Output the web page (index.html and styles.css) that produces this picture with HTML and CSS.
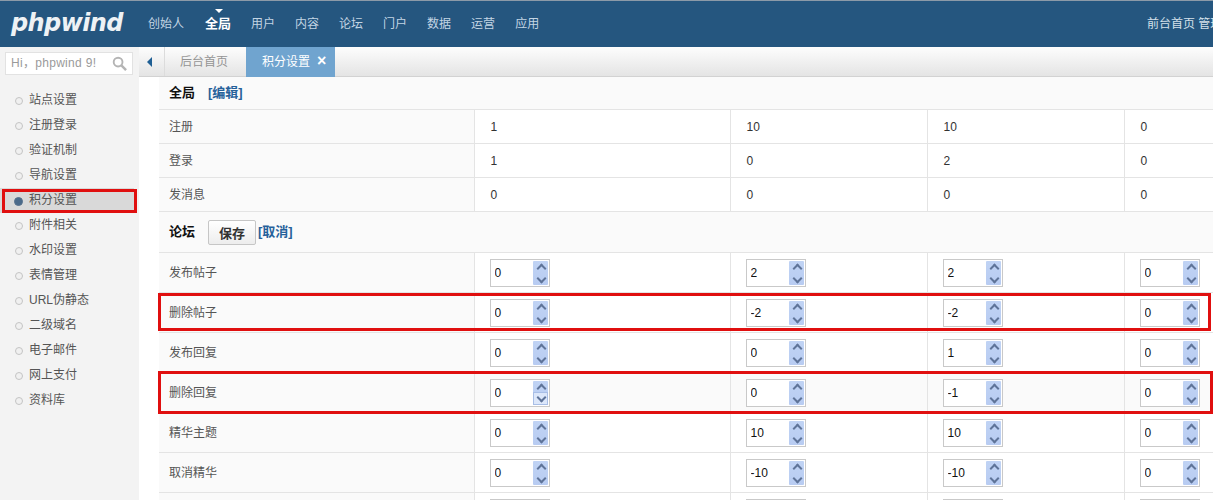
FILE: index.html
```html
<!DOCTYPE html>
<html lang="zh">
<head>
<meta charset="utf-8">
<title>积分设置</title>
<link rel="stylesheet" href="styles.css">
</head>
<body>
<header class="top">
  <div class="logo">phpwind</div>
  <nav class="nav">
    <a class="nav-item">创始人</a>
    <a class="nav-item is-current">全局</a>
    <a class="nav-item">用户</a>
    <a class="nav-item">内容</a>
    <a class="nav-item">论坛</a>
    <a class="nav-item">门户</a>
    <a class="nav-item">数据</a>
    <a class="nav-item">运营</a>
    <a class="nav-item">应用</a>
  </nav>
  <div class="top-right">前台首页 管理</div>
</header>
<div class="body-wrap">
  <aside class="side">
    <div class="search">
      <span class="search-text">Hi，phpwind 9!</span>
      <svg class="search-icon" width="15" height="15" viewBox="0 0 16 16"><circle cx="6.5" cy="6.5" r="4.7" fill="none" stroke="#b4b4b4" stroke-width="2"/><path d="M10 10l5 5" stroke="#b4b4b4" stroke-width="2.6" fill="none"/></svg>
    </div>
    <ul class="menu">
      <li class="menu-item">站点设置</li>
      <li class="menu-item">注册登录</li>
      <li class="menu-item">验证机制</li>
      <li class="menu-item">导航设置</li>
      <li class="menu-item is-active">积分设置</li>
      <li class="menu-item">附件相关</li>
      <li class="menu-item">水印设置</li>
      <li class="menu-item">表情管理</li>
      <li class="menu-item">URL伪静态</li>
      <li class="menu-item">二级域名</li>
      <li class="menu-item">电子邮件</li>
      <li class="menu-item">网上支付</li>
      <li class="menu-item">资料库</li>
    </ul>
  </aside>
  <main class="main">
    <div class="tabs">
      <div class="tab-toggle"><span class="tab-arrow"></span></div>
      <div class="tab">后台首页</div>
      <div class="tab is-on">积分设置<span class="tab-close">×</span></div>
    </div>
    <div class="content">
      <table class="grid">
        <colgroup><col class="c1"><col class="c2"><col class="c3"><col class="c4"><col class="c5"></colgroup>
        <tr class="head"><th colspan="5"><b class="sec">全局</b><a class="link">[编辑]</a></th></tr>
        <tr class="plain"><td>注册</td><td>1</td><td>10</td><td>10</td><td>0</td></tr>
        <tr class="plain"><td>登录</td><td>1</td><td>0</td><td>2</td><td>0</td></tr>
        <tr class="plain"><td>发消息</td><td>0</td><td>0</td><td>0</td><td>0</td></tr>
        <tr class="head head-form"><th colspan="5"><b class="sec">论坛</b><button class="save">保存</button><a class="link">[取消]</a></th></tr>
        <tr class="form"><td>发布帖子</td>
          <td><span class="num"><input class="num-in" value="0"><span class="spin"><i class="up"></i><i class="down"></i></span></span></td>
          <td><span class="num"><input class="num-in" value="2"><span class="spin"><i class="up"></i><i class="down"></i></span></span></td>
          <td><span class="num"><input class="num-in" value="2"><span class="spin"><i class="up"></i><i class="down"></i></span></span></td>
          <td><span class="num"><input class="num-in" value="0"><span class="spin"><i class="up"></i><i class="down"></i></span></span></td></tr>
        <tr class="form"><td>删除帖子</td>
          <td><span class="num"><input class="num-in" value="0"><span class="spin"><i class="up"></i><i class="down"></i></span></span></td>
          <td><span class="num"><input class="num-in" value="-2"><span class="spin"><i class="up"></i><i class="down"></i></span></span></td>
          <td><span class="num"><input class="num-in" value="-2"><span class="spin"><i class="up"></i><i class="down"></i></span></span></td>
          <td><span class="num"><input class="num-in" value="0"><span class="spin"><i class="up"></i><i class="down"></i></span></span></td></tr>
        <tr class="form"><td>发布回复</td>
          <td><span class="num"><input class="num-in" value="0"><span class="spin"><i class="up"></i><i class="down"></i></span></span></td>
          <td><span class="num"><input class="num-in" value="0"><span class="spin"><i class="up"></i><i class="down"></i></span></span></td>
          <td><span class="num"><input class="num-in" value="1"><span class="spin"><i class="up"></i><i class="down"></i></span></span></td>
          <td><span class="num"><input class="num-in" value="0"><span class="spin"><i class="up"></i><i class="down"></i></span></span></td></tr>
        <tr class="form is-hover"><td>删除回复</td>
          <td><span class="num"><input class="num-in" value="0"><span class="spin is-hover"><i class="up"></i><i class="down"></i></span></span></td>
          <td><span class="num"><input class="num-in" value="0"><span class="spin"><i class="up"></i><i class="down"></i></span></span></td>
          <td><span class="num"><input class="num-in" value="-1"><span class="spin"><i class="up"></i><i class="down"></i></span></span></td>
          <td><span class="num"><input class="num-in" value="0"><span class="spin"><i class="up"></i><i class="down"></i></span></span></td></tr>
        <tr class="form"><td>精华主题</td>
          <td><span class="num"><input class="num-in" value="0"><span class="spin"><i class="up"></i><i class="down"></i></span></span></td>
          <td><span class="num"><input class="num-in" value="10"><span class="spin"><i class="up"></i><i class="down"></i></span></span></td>
          <td><span class="num"><input class="num-in" value="10"><span class="spin"><i class="up"></i><i class="down"></i></span></span></td>
          <td><span class="num"><input class="num-in" value="0"><span class="spin"><i class="up"></i><i class="down"></i></span></span></td></tr>
        <tr class="form"><td>取消精华</td>
          <td><span class="num"><input class="num-in" value="0"><span class="spin"><i class="up"></i><i class="down"></i></span></span></td>
          <td><span class="num"><input class="num-in" value="-10"><span class="spin"><i class="up"></i><i class="down"></i></span></span></td>
          <td><span class="num"><input class="num-in" value="-10"><span class="spin"><i class="up"></i><i class="down"></i></span></span></td>
          <td><span class="num"><input class="num-in" value="0"><span class="spin"><i class="up"></i><i class="down"></i></span></span></td></tr>
        <tr class="form"><td></td>
          <td><span class="num"><input class="num-in" value="0"><span class="spin"><i class="up"></i><i class="down"></i></span></span></td>
          <td><span class="num"><input class="num-in" value="0"><span class="spin"><i class="up"></i><i class="down"></i></span></span></td>
          <td><span class="num"><input class="num-in" value="0"><span class="spin"><i class="up"></i><i class="down"></i></span></span></td>
          <td><span class="num"><input class="num-in" value="0"><span class="spin"><i class="up"></i><i class="down"></i></span></span></td></tr>
      </table>
    </div>
  </main>
</div>
<div class="mark mark-side"></div>
<div class="mark mark-row1"></div>
<div class="mark mark-row2"></div>
</body>
</html>
```
FILE: styles.css
```css
* { box-sizing: border-box; }
html, body { margin: 0; height: 500px; overflow: hidden; background: #fff; }
body { position: relative; width: 1213px; font: 12px/1.4 "Liberation Sans", "Noto Sans CJK SC", sans-serif; color: #444; }
a { text-decoration: none; }

.top { height: 47px; display: flex; align-items: center; background: #25567f; border-top: 1px solid #8c9aa8; overflow: hidden; position: relative; }
.logo { width: 148px; flex: none; padding-left: 11px; margin-top: -2px; font: italic bold 24px/1 "DejaVu Sans", sans-serif; color: #eef2f5; letter-spacing: -.6px; }
.nav { display: flex; gap: 20px; }
.nav-item { color: #c3d5e4; font-size: 12px; line-height: 18px; position: relative; white-space: nowrap; }
.nav-item.is-current { color: #fff; font-weight: bold; font-size: 13px; margin-left: 1px; }
.nav-item.is-current::before { content: ""; position: absolute; left: 10px; top: -6px; border: 4px solid transparent; border-top-color: #fff; border-bottom-width: 0; }
.top-right { position: absolute; left: 1147px; top: 14px; white-space: nowrap; color: #d4e0ea; line-height: 18px; }

.body-wrap { display: flex; height: 453px; }
.side { width: 139px; flex: none; background: #f3f3f3; padding: 5px 5px 0 0; }
.search { margin-left: 5px; height: 23px; width: 128px; background: #fff; border: 1px solid #e2e2e2; display: flex; align-items: center; padding: 0 5px; overflow: hidden; position: relative; }
.search-text { color: #9a9a9a; white-space: nowrap; font-size: 12px; letter-spacing: .3px; width: 88px; overflow: hidden; }
.search-icon { position: absolute; right: 5px; top: 3px; }
.menu { list-style: none; margin: 13px 0 0; padding: 0; }
.menu-item { height: 25px; line-height: 25px; padding-left: 29px; color: #555; position: relative; white-space: nowrap; }
.menu-item::before { content: ""; position: absolute; left: 15px; top: 9px; width: 6px; height: 6px; border-radius: 50%; border: 1px solid #c4c4c4; background: #f0f0f0; }
.menu-item.is-active { background: #d9d9d9; width: 134px; }
.menu-item.is-active::before { left: 14px; width: 7px; height: 7px; background: #4a6a8a; border-color: #56708c; }

.main { flex: 1; min-width: 0; display: flex; flex-direction: column; }
.tabs { height: 30px; flex: none; display: flex; background: linear-gradient(#fdfdfd, #e4e4e4); border-bottom: 1px solid #d2d2d2; }
.tab-toggle { width: 26px; flex: none; border-right: 1px solid #dcdcdc; display: flex; align-items: center; padding-left: 8px; }
.tab-arrow { border: 5px solid transparent; border-right: 5px solid #1f5f94; border-left-width: 0; }
.tab { width: 81px; padding-left: 15px; line-height: 30px; color: #949494; }
.tab.is-on { width: 89px; padding-left: 16px; background: #70a4cf; color: #fff; height: 30px; }
.tab-close { font-weight: bold; font-size: 16px; margin-left: 7px; line-height: 1; }

.content { flex: 1; padding-left: 20px; background: #fff; overflow: hidden; }
.grid { width: 1054px; border-collapse: collapse; table-layout: fixed; }
.c1 { width: 315px; } .c2 { width: 256px; } .c3 { width: 197px; } .c4 { width: 197px; } .c5 { width: 89px; }
.grid th { text-align: left; font-weight: normal; padding: 1px 0 0 10px; background: #fafafa; border-bottom: 1px solid #e4e4e4; }
.grid td { padding: 3px 0 0 16px; border-bottom: 1px solid #e4e4e4; border-left: 1px solid #e4e4e4; background: #fff; color: #333; }
.grid td:first-child { padding-left: 10px; border-left: 0; color: #555; background: #fafafa; }
.head { height: 32px; }
.head-form { height: 41px; }
.plain { height: 34px; }
.form { height: 40px; }
.grid .form td { padding: 2px 0 0 15px; }
.grid .form td:first-child { padding-left: 10px; }
.is-hover td { background: #fafafa; }
.sec { color: #111; font-weight: bold; font-size: 13px; margin-right: 13px; }
.link { color: #26619a; font-weight: bold; font-size: 13px; }
.head-form .sec, .head-form .link { vertical-align: 2px; }
.save { width: 48px; height: 25px; padding: 0; margin: 0 2px 0 0; border: 1px solid #c6c6c6; border-radius: 2px; background: linear-gradient(#fff, #ededed); color: #333; font: bold 13px "Liberation Sans", "Noto Sans CJK SC", sans-serif; }

.num { display: inline-flex; width: 60px; height: 28px; vertical-align: middle; position: relative; background: #fff; border: 1px solid #c9c9c9; }
.num-in { width: 42px; height: 26px; border: 0; padding: 0 0 0 4px; font: 12px "Liberation Sans", sans-serif; color: #111; background: transparent; outline: 0; }
.spin { width: 15px; height: 24px; margin-top: 1px; display: flex; flex-direction: column; background: linear-gradient(#c0d3f4, #b8ccf2); border-radius: 1px; }
.spin i { flex: 1; position: relative; display: block; }
.spin i::after { content: ""; position: absolute; width: 5px; height: 5px; border-left: 2px solid #5f7499; border-top: 2px solid #5f7499; transform: rotate(45deg); top: 4px; left: 5px; }
.spin .down::after { transform: rotate(225deg); top: 2px; }
.spin.is-hover .down { background: #dce7fa; border: 1px solid #a8bee6; }
.spin.is-hover .down::after { left: 4px; top: 1px; }

.mark { position: absolute; border: 3px solid #e00f0f; pointer-events: none; }
.mark-side { left: 2px; top: 189px; width: 135px; height: 24px; }
.mark-row1 { left: 158px; top: 293px; width: 1053px; height: 38px; }
.mark-row2 { left: 158px; top: 371px; width: 1055px; height: 43px; }
```
